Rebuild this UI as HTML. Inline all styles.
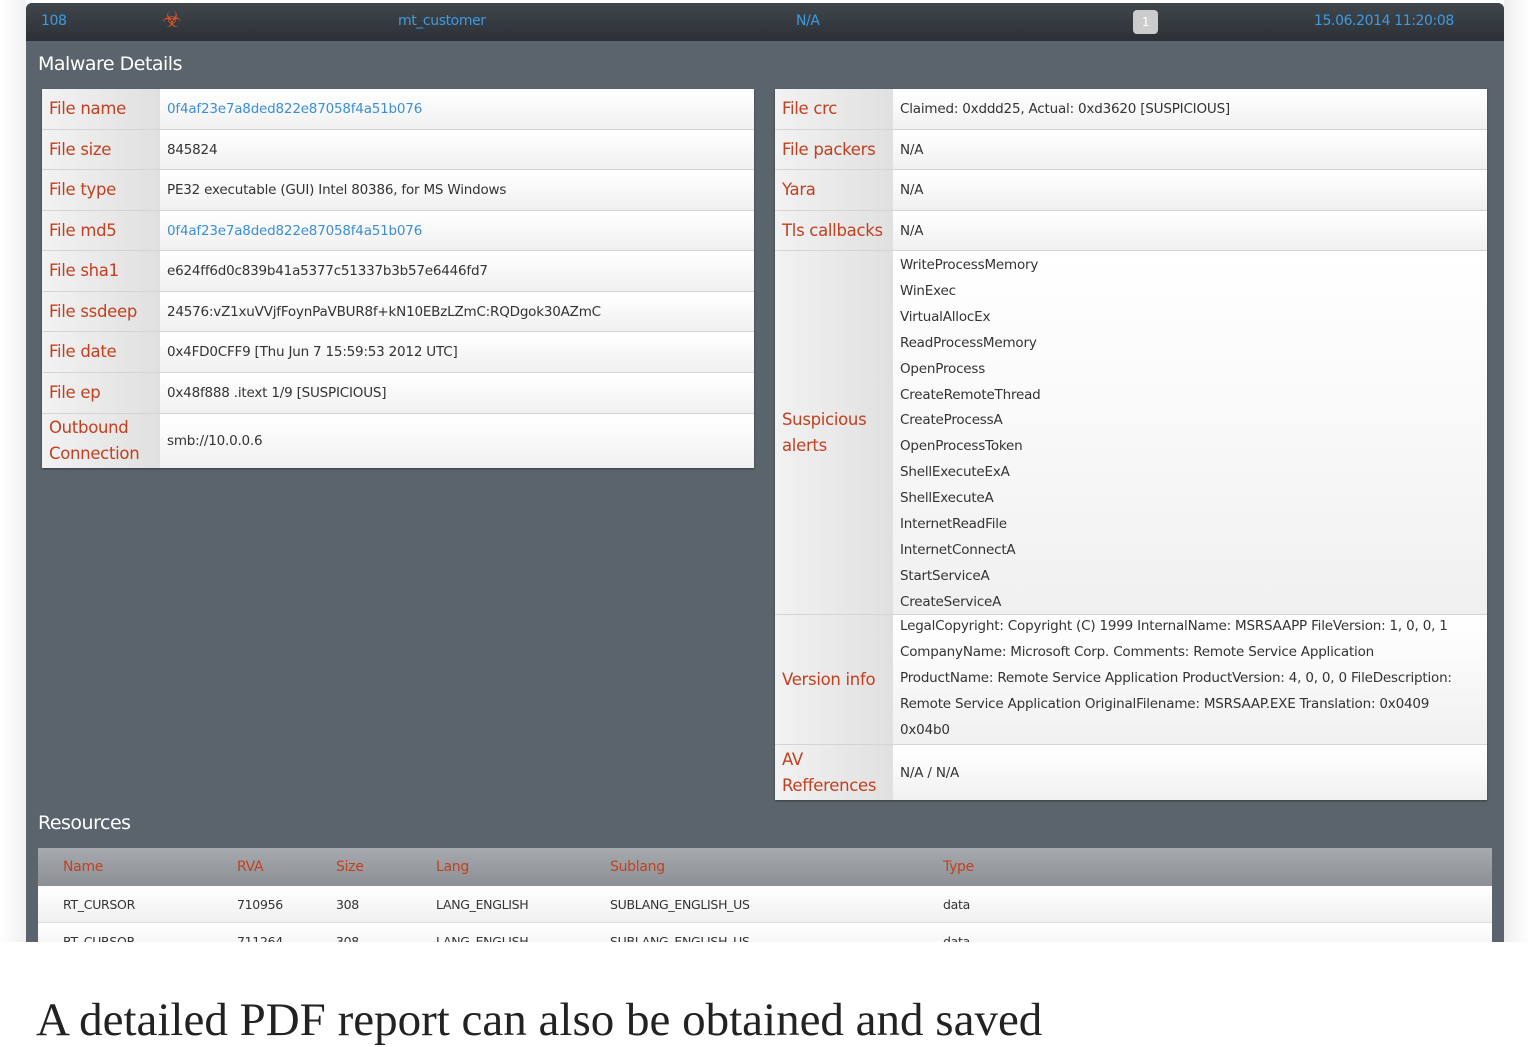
<!DOCTYPE html>
<html><head><meta charset="utf-8"><style>
*{margin:0;padding:0;box-sizing:border-box}
body{width:1530px;height:1013px;background:#fff;position:relative;overflow:hidden;font-family:"DejaVu Sans","Liberation Sans",sans-serif}
.panel{position:absolute;left:26px;top:3px;width:1478px;height:939px;background:#5b646c;border-radius:6px 6px 0 0;overflow:hidden}
.hdr{position:absolute;left:0;top:0;width:100%;height:38px;background:linear-gradient(#40474d,#2b3035);color:#3f9ae0;font-size:14px;letter-spacing:-0.4px}
.hdr span{position:absolute;top:10px}
h2{position:absolute;color:#fff;font-size:19px;font-weight:normal;letter-spacing:-0.5px}
.tbl{position:absolute;background:#fff;box-shadow:0 1px 2px rgba(0,0,0,.4)}
.row{position:absolute;left:0;width:100%;border-bottom:1px solid #d4d4d4}
.lab{position:absolute;left:0;top:0;bottom:0;width:118px;background:linear-gradient(90deg,#f2f2f2,#e0e0e0);color:#c2401f;font-size:16.5px;padding-left:7px;display:flex;align-items:center;line-height:26px;letter-spacing:-0.3px}
.val{position:absolute;left:118px;right:0;top:0;bottom:0;background:linear-gradient(#fff,#fafafa 40%,#f0f0f0);color:#333;font-size:13.5px;padding-left:7px;display:flex;align-items:center;letter-spacing:-0.2px}
.blue{color:#3a8fd6}
.list{position:absolute;left:125px;top:2px;font-size:13.5px;color:#333;line-height:25.9px;letter-spacing:-0.2px;white-space:nowrap}
.res{position:absolute;left:12px;top:845px;width:1454px;height:94px;background:#f8f8f8}
.rh{position:absolute;left:0;top:0;width:100%;height:38px;background:linear-gradient(#a6aaae,#8c9094);color:#c2401f;font-size:14px;letter-spacing:-0.3px}
.rr{position:absolute;left:0;width:100%;height:37px;font-size:12.5px;color:#333;background:linear-gradient(#fff,#f0f0f0);border-bottom:1px solid #ddd;letter-spacing:-0.3px}
.rh span,.rr span{position:absolute;top:11px}
.cap{position:absolute;left:36px;top:993px;font-family:"Liberation Serif",serif;font-size:47px;color:#222;white-space:nowrap}
</style></head><body>
<div style="position:absolute;left:0;top:0;width:26px;height:942px;background:linear-gradient(90deg,#fff,#f0f0f0)"></div>
<div style="position:absolute;left:1504px;top:0;width:26px;height:942px;background:linear-gradient(90deg,#eee,#fff)"></div>
<div class="panel">
 <div class="hdr">
  <span style="left:15px">108</span>
  <span style="left:136px;top:5px;color:#d2562a;font-size:22px;letter-spacing:0">☣</span>
  <span style="left:372px">mt_customer</span>
  <span style="left:770px">N/A</span>
  <span style="left:1107px;top:7px;width:25px;height:24px;background:#ccc;border-radius:4px;color:#fff;text-align:center;font-size:12px;line-height:24px">1</span>
  <span style="left:1288px">15.06.2014 11:20:08</span>
 </div>
 <h2 style="left:12px;top:50px">Malware Details</h2>
 <h2 style="left:12px;top:809px">Resources</h2>

 <div class="tbl" style="left:16px;top:86px;width:712px;height:379px">
  <div class="row" style="top:0;height:41px"><div class="lab">File name</div><div class="val blue">0f4af23e7a8ded822e87058f4a51b076</div></div>
  <div class="row" style="top:41px;height:40px"><div class="lab">File size</div><div class="val">845824</div></div>
  <div class="row" style="top:81px;height:41px"><div class="lab">File type</div><div class="val">PE32 executable (GUI) Intel 80386, for MS Windows</div></div>
  <div class="row" style="top:122px;height:40px"><div class="lab">File md5</div><div class="val blue">0f4af23e7a8ded822e87058f4a51b076</div></div>
  <div class="row" style="top:162px;height:41px"><div class="lab">File sha1</div><div class="val">e624ff6d0c839b41a5377c51337b3b57e6446fd7</div></div>
  <div class="row" style="top:203px;height:40px"><div class="lab">File ssdeep</div><div class="val">24576:vZ1xuVVjfFoynPaVBUR8f+kN10EBzLZmC:RQDgok30AZmC</div></div>
  <div class="row" style="top:243px;height:41px"><div class="lab">File date</div><div class="val">0x4FD0CFF9 [Thu Jun 7 15:59:53 2012 UTC]</div></div>
  <div class="row" style="top:284px;height:41px"><div class="lab">File ep</div><div class="val">0x48f888 .itext 1/9 [SUSPICIOUS]</div></div>
  <div class="row" style="top:325px;height:54px;border:0"><div class="lab">Outbound Connection</div><div class="val">smb://10.0.0.6</div></div>
 </div>

 <div class="tbl" style="left:749px;top:86px;width:712px;height:711px">
  <div class="row" style="top:0;height:41px"><div class="lab">File crc</div><div class="val">Claimed: 0xddd25, Actual: 0xd3620 [SUSPICIOUS]</div></div>
  <div class="row" style="top:41px;height:40px"><div class="lab">File packers</div><div class="val">N/A</div></div>
  <div class="row" style="top:81px;height:41px"><div class="lab">Yara</div><div class="val">N/A</div></div>
  <div class="row" style="top:122px;height:40px"><div class="lab">Tls callbacks</div><div class="val">N/A</div></div>
  <div class="row" style="top:162px;height:364px"><div class="lab">Suspicious alerts</div><div class="val"></div>
   <div class="list">WriteProcessMemory<br>WinExec<br>VirtualAllocEx<br>ReadProcessMemory<br>OpenProcess<br>CreateRemoteThread<br>CreateProcessA<br>OpenProcessToken<br>ShellExecuteExA<br>ShellExecuteA<br>InternetReadFile<br>InternetConnectA<br>StartServiceA<br>CreateServiceA</div></div>
  <div class="row" style="top:526px;height:130px"><div class="lab">Version info</div><div class="val"></div>
   <div class="list" style="top:-1px">LegalCopyright: Copyright (C) 1999 InternalName: MSRSAAPP FileVersion: 1, 0, 0, 1<br>CompanyName: Microsoft Corp. Comments: Remote Service Application<br>ProductName: Remote Service Application ProductVersion: 4, 0, 0, 0 FileDescription:<br>Remote Service Application OriginalFilename: MSRSAAP.EXE Translation: 0x0409<br>0x04b0</div></div>
  <div class="row" style="top:656px;height:55px;border:0"><div class="lab">AV Refferences</div><div class="val">N/A / N/A</div></div>
 </div>

 <div class="res">
  <div class="rh"><span style="left:25px">Name</span><span style="left:199px">RVA</span><span style="left:298px">Size</span><span style="left:398px">Lang</span><span style="left:572px">Sublang</span><span style="left:905px">Type</span></div>
  <div class="rr" style="top:38px"><span style="left:25px">RT_CURSOR</span><span style="left:199px">710956</span><span style="left:298px">308</span><span style="left:398px">LANG_ENGLISH</span><span style="left:572px">SUBLANG_ENGLISH_US</span><span style="left:905px">data</span></div>
  <div class="rr" style="top:75px"><span style="left:25px">RT_CURSOR</span><span style="left:199px">711264</span><span style="left:298px">308</span><span style="left:398px">LANG_ENGLISH</span><span style="left:572px">SUBLANG_ENGLISH_US</span><span style="left:905px">data</span></div>
 </div>
</div>
<div class="cap">A detailed PDF report can also be obtained and saved</div>
</body></html>
